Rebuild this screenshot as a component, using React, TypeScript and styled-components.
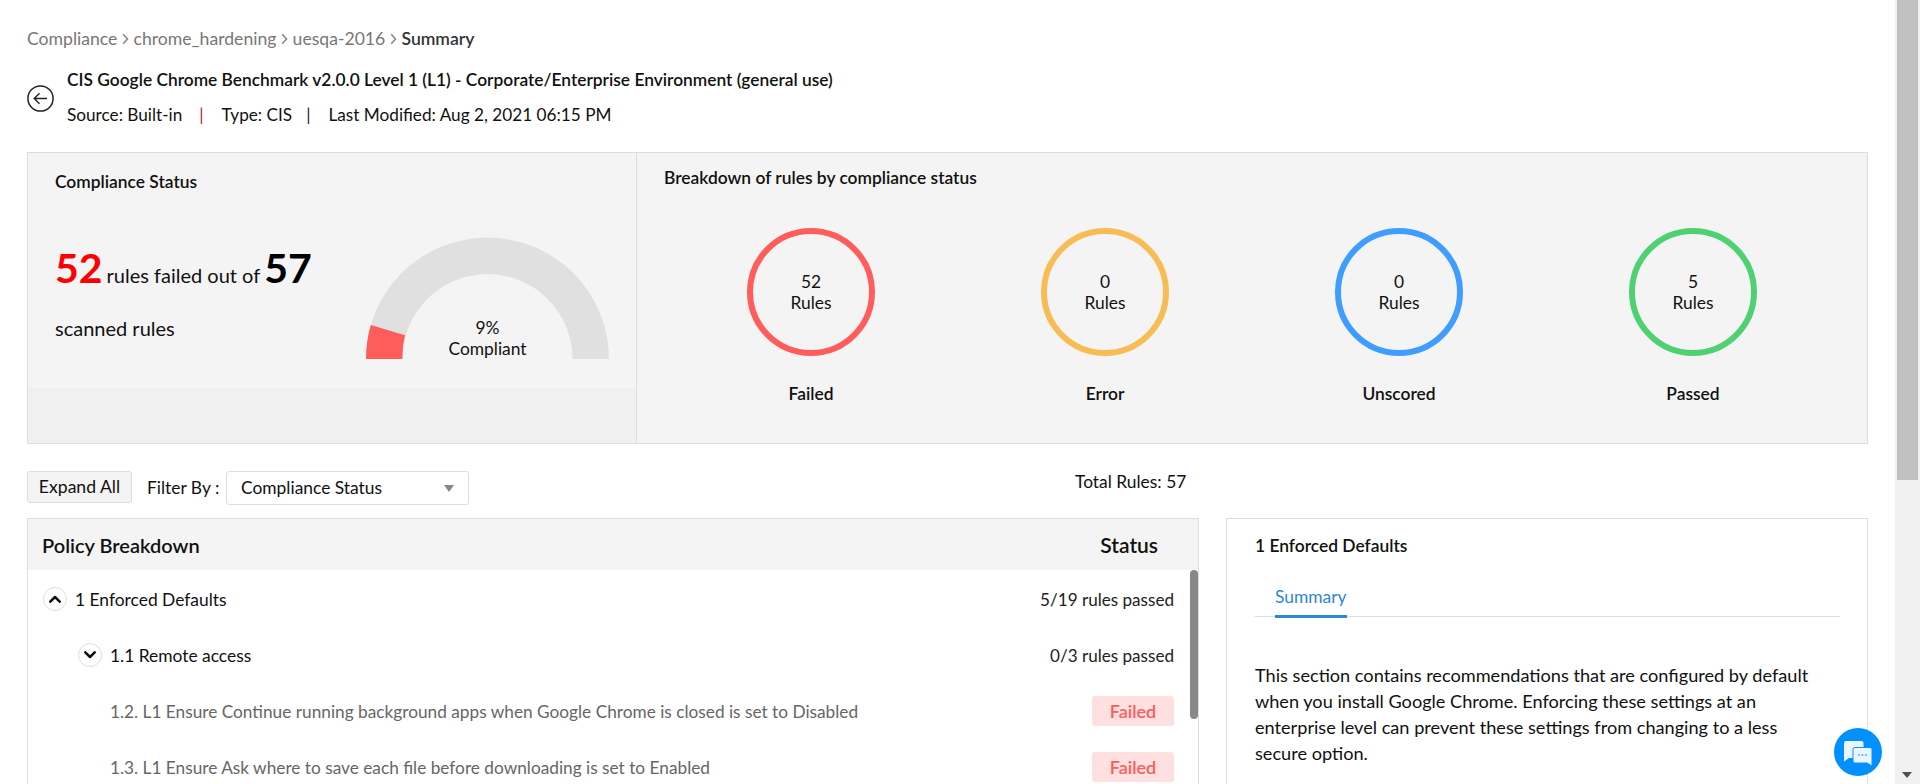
import React from 'react';
import styled, { createGlobalStyle } from 'styled-components';

const GlobalStyle = createGlobalStyle`
  html, body {
    margin: 0;
    height: 100%;
    overflow: hidden;
    background: #fff;
  }
  body {
    font-family: Lato, "Noto Sans", sans-serif;
    font-size: 17.4px;
    color: #111;
  }
  * {
    box-sizing: border-box;
  }
`;

const STATUS_CIRCLES = [
  { count: 52, label: 'Failed', color: '#ff5c5c' },
  { count: 0, label: 'Error', color: '#f8bc55' },
  { count: 0, label: 'Unscored', color: '#3f9dff' },
  { count: 5, label: 'Passed', color: '#4fd171' },
];

const Chevron = ({ up }: { up?: boolean }) => (
  <svg width="12" height="8" viewBox="0 0 12 8" fill="none" aria-hidden>
    <path d={up ? 'M1.3 6.7L6 2l4.7 4.7' : 'M1.3 1.3L6 6l4.7-4.7'} stroke="#111" strokeWidth="2.5" strokeLinecap="round" strokeLinejoin="round" />
  </svg>
);

const CrumbArrow = () => (
  <svg width="7" height="12" viewBox="0 0 7 12" fill="none" aria-hidden>
    <path d="M1.2 1.2L5.5 6l-4.3 4.8" stroke="#888" strokeWidth="1.6" />
  </svg>
);

const BackIcon = () => (
  <svg width="27" height="27" viewBox="0 0 27 27" fill="none" aria-hidden>
    <circle cx="13.5" cy="13.5" r="12.6" stroke="#222" strokeWidth="1.5" />
    <path d="M20 13.5H7.5M12.5 8.2l-5.3 5.3 5.3 5.3" stroke="#222" strokeWidth="1.4" />
  </svg>
);

const Gauge = () => (
  <svg width="243" height="122" viewBox="0 0 243 122" aria-hidden>
    <path d="M0 122A121.5 121.5 0 0 1 243 122H206.5A85 85 0 0 0 36.5 122Z" fill="#e0e0e0" />
    <path d="M0 122A121.5 121.5 0 0 1 4.8 88.1L39 98.3A85 85 0 0 0 36.5 122Z" fill="#ff5c5c" />
  </svg>
);

const ChatIcon = () => (
  <svg width="48" height="48" viewBox="0 0 48 48" aria-hidden>
    <path d="M12 13h15.5a2 2 0 0 1 2 2v13a2 2 0 0 1-2 2H15l-5 3.5V15a2 2 0 0 1 2-2Z" fill="#e9f4ff" />
    <path d="M21 19.5h15a2 2 0 0 1 2 2V38l-5-3H21a2 2 0 0 1-2-2V21.5a2 2 0 0 1 2-2Z" fill="#e9f4ff" stroke="#0a93ff" strokeWidth="1" />
    <circle cx="25" cy="27" r="0.9" fill="#4fa9f5" />
    <circle cx="28.5" cy="27" r="0.9" fill="#4fa9f5" />
    <circle cx="32" cy="27" r="0.9" fill="#4fa9f5" />
  </svg>
);

const App = () => (
  <Page>
    <GlobalStyle />
    <Main>
      <Breadcrumb>
        <span>Compliance</span>
        <CrumbArrow />
        <span>chrome_hardening</span>
        <CrumbArrow />
        <span>uesqa-2016</span>
        <CrumbArrow />
        <CrumbCurrent>Summary</CrumbCurrent>
      </Breadcrumb>

      <Header>
        <BackButton>
          <BackIcon />
        </BackButton>
        <div>
          <Title>CIS Google Chrome Benchmark v2.0.0 Level 1 (L1) - Corporate/Enterprise Environment (general use)</Title>
          <Meta>
            <span>Source: Built-in</span>
            <MetaSeparator $red>|</MetaSeparator>
            <span>Type: CIS</span>
            <MetaSeparator>|</MetaSeparator>
            <span>Last Modified: Aug 2, 2021 06:15 PM</span>
          </Meta>
        </div>
      </Header>

      <StatusPanel>
        <ComplianceSection>
          <ComplianceTop>
            <SectionTitle>Compliance Status</SectionTitle>
            <ComplianceBody>
              <StatColumn>
                <StatLine>
                  <BigNumber $failed>52</BigNumber>
                  <StatText>rules failed out of</StatText>
                  <BigNumber>57</BigNumber>
                </StatLine>
                <ScannedText>scanned rules</ScannedText>
              </StatColumn>
              <GaugeWrap>
                <Gauge />
                <GaugeLabel>
                  9%
                  <br />
                  Compliant
                </GaugeLabel>
              </GaugeWrap>
            </ComplianceBody>
          </ComplianceTop>
        </ComplianceSection>

        <BreakdownSection>
          <BreakdownTitle>Breakdown of rules by compliance status</BreakdownTitle>
          <CircleRow>
            {STATUS_CIRCLES.map(({ count, label, color }) => (
              <CircleColumn key={label}>
                <Circle $color={color}>
                  <div>{count}</div>
                  <div>Rules</div>
                </Circle>
                <CircleLabel>{label}</CircleLabel>
              </CircleColumn>
            ))}
          </CircleRow>
        </BreakdownSection>
      </StatusPanel>

      <Toolbar>
        <FilterGroup>
          <ExpandButton>Expand All</ExpandButton>
          <FilterLabel>Filter By :</FilterLabel>
          <Select>
            Compliance Status
            <SelectArrow />
          </Select>
        </FilterGroup>
        <TotalRules>Total Rules: 57</TotalRules>
      </Toolbar>

      <Columns>
        <PolicyTable>
          <TableHead>
            <span>Policy Breakdown</span>
            <StatusHeading>Status</StatusHeading>
          </TableHead>
          <TableBody>
            <Row $indent={15}>
              <RowLabel>
                <ToggleButton>
                  <Chevron up />
                </ToggleButton>
                1 Enforced Defaults
              </RowLabel>
              <RowStatus>5/19 rules passed</RowStatus>
            </Row>
            <Row $indent={50}>
              <RowLabel>
                <ToggleButton>
                  <Chevron />
                </ToggleButton>
                1.1 Remote access
              </RowLabel>
              <RowStatus>0/3 rules passed</RowStatus>
            </Row>
            <Row $indent={82}>
              <RuleLabel>1.2. L1 Ensure Continue running background apps when Google Chrome is closed is set to Disabled</RuleLabel>
              <FailedBadge>Failed</FailedBadge>
            </Row>
            <Row $indent={82}>
              <RuleLabel>1.3. L1 Ensure Ask where to save each file before downloading is set to Enabled</RuleLabel>
              <FailedBadge>Failed</FailedBadge>
            </Row>
            <TableThumb />
          </TableBody>
        </PolicyTable>

        <DetailPanel>
          <DetailTitle>1 Enforced Defaults</DetailTitle>
          <Tabs>
            <ActiveTab>Summary</ActiveTab>
          </Tabs>
          <DetailText>
            This section contains recommendations that are configured by default when you install Google Chrome. Enforcing
            these settings at an enterprise level can prevent these settings from changing to a less secure option.
          </DetailText>
        </DetailPanel>
      </Columns>
    </Main>

    <Scrollbar>
      <ScrollThumb />
      <ScrollArrow />
    </Scrollbar>

    <ChatButton>
      <ChatIcon />
    </ChatButton>
  </Page>
);

export default App;

const Page = styled.div`
  display: flex;
  width: 1920px;
  height: 784px;
  overflow: hidden;
`;

const Main = styled.main`
  flex: 1;
  min-width: 0;
  padding: 28px 27px 0;
`;

const Breadcrumb = styled.nav`
  display: flex;
  align-items: center;
  gap: 4.6px;
  height: 22px;
  font-size: 17.6px;
  line-height: 22px;
  color: #777;
`;

const CrumbCurrent = styled.span`
  color: #333;
  font-weight: 600;
`;

const Header = styled.header`
  display: flex;
  align-items: center;
  gap: 13px;
  margin-top: 19px;
`;

const BackButton = styled.div`
  display: flex;
  margin-top: 1px;
`;

const Title = styled.div`
  font-size: 17.35px;
  font-weight: 600;
  line-height: 22px;
`;

const Meta = styled.div`
  display: flex;
  margin-top: 13px;
  font-size: 17.2px;
  line-height: 22px;
`;

const MetaSeparator = styled.span<{ $red?: boolean }>`
  margin: ${({ $red }) => ($red ? '0 18px 0 17px' : '0 18px 0 14px')};
  color: ${({ $red }) => ($red ? '#c8102e' : '#222')};
`;

const StatusPanel = styled.section`
  display: flex;
  height: 292px;
  margin-top: 26px;
  border: 1px solid #ddd;
`;

const ComplianceSection = styled.div`
  width: 609px;
  background: #f0f0f0;
  border-right: 1px solid #ddd;
`;

const ComplianceTop = styled.div`
  height: 235px;
  padding: 19px 27px 0;
  background: #f4f4f4;
`;

const SectionTitle = styled.div`
  font-weight: 600;
  line-height: 20px;
`;

const ComplianceBody = styled.div`
  display: flex;
  margin-top: 45px;
`;

const StatColumn = styled.div`
  width: 311px;
`;

const StatLine = styled.div`
  display: flex;
  align-items: baseline;
  gap: 4px;
  height: 62px;
  line-height: 62px;
`;

const BigNumber = styled.span<{ $failed?: boolean }>`
  font-size: 41px;
  font-weight: 700;
  color: ${({ $failed }) => ($failed ? '#f00' : '#000')};
`;

const StatText = styled.span`
  font-size: 20px;
`;

const ScannedText = styled.div`
  margin-top: 18px;
  font-size: 20px;
  line-height: 22px;
`;

const GaugeWrap = styled.div`
  position: relative;
  width: 243px;
  height: 122px;
`;

const GaugeLabel = styled.div`
  position: absolute;
  left: 0;
  right: 0;
  bottom: 0;
  text-align: center;
  line-height: 21px;
`;

const BreakdownSection = styled.div`
  flex: 1;
  padding: 15px 27px 0 27px;
  background: #f4f4f4;
`;

const BreakdownTitle = styled.div`
  font-weight: 600;
  line-height: 20px;
`;

const CircleRow = styled.div`
  display: grid;
  grid-template-columns: repeat(4, 1fr);
  margin-top: 40px;
`;

const CircleColumn = styled.div`
  display: flex;
  flex-direction: column;
  align-items: center;
`;

const Circle = styled.div<{ $color: string }>`
  display: flex;
  flex-direction: column;
  align-items: center;
  justify-content: center;
  width: 128px;
  height: 128px;
  border: 6px solid ${({ $color }) => $color};
  border-radius: 50%;
  line-height: 21px;
  text-align: center;
`;

const CircleLabel = styled.div`
  margin-top: 28px;
  font-weight: 600;
  line-height: 20px;
`;

const Toolbar = styled.div`
  display: flex;
  align-items: flex-start;
  height: 74px;
  padding-top: 27px;
`;

const FilterGroup = styled.div`
  display: flex;
  align-items: flex-start;
  width: 1048px;
`;

const ExpandButton = styled.div`
  width: 105px;
  height: 32px;
  border: 1px solid #ddd;
  border-radius: 3px;
  background: #f4f4f4;
  font-size: 17.6px;
  line-height: 30px;
  text-align: center;
`;

const FilterLabel = styled.div`
  margin-left: 15px;
  width: 79px;
  line-height: 34px;
`;

const Select = styled.div`
  position: relative;
  width: 243px;
  height: 34px;
  padding-left: 14px;
  border: 1px solid #ddd;
  border-radius: 3px;
  background: #fff;
  line-height: 32px;
`;

const SelectArrow = styled.span`
  position: absolute;
  top: 13px;
  right: 14px;
  border-left: 5.5px solid transparent;
  border-right: 5.5px solid transparent;
  border-top: 7px solid #888;
`;

const TotalRules = styled.div`
  line-height: 22px;
`;

const Columns = styled.div`
  display: grid;
  grid-template-columns: 1172px 642px;
  gap: 27px;
`;

const PolicyTable = styled.section`
  height: 266px;
  border: 1px solid #ddd;
  border-bottom: none;
`;

const TableHead = styled.div`
  display: flex;
  justify-content: space-between;
  align-items: center;
  height: 51px;
  padding: 0 40px 0 14px;
  background: #f4f4f4;
  font-size: 20px;
  font-weight: 600;
`;

const StatusHeading = styled.span`
  font-size: 21px;
`;

const TableBody = styled.div`
  position: relative;
  height: 214px;
  padding-top: 1px;
  overflow: hidden;
`;

const TableThumb = styled.div`
  position: absolute;
  top: 0;
  right: 0;
  width: 8px;
  height: 149px;
  border-radius: 4px;
  background: #888;
`;

const Row = styled.div<{ $indent: number }>`
  display: flex;
  justify-content: space-between;
  align-items: center;
  height: 56px;
  padding: 0 24px 0 ${({ $indent }) => $indent}px;
`;

const RowLabel = styled.div`
  display: flex;
  align-items: center;
  gap: 8px;
`;

const ToggleButton = styled.span`
  display: flex;
  align-items: center;
  justify-content: center;
  width: 24px;
  height: 24px;
  border: 1px solid #ddd;
  border-radius: 50%;
  background: #fff;
`;

const RowStatus = styled.div`
  font-size: 17.1px;
  color: #222;
`;

const RuleLabel = styled.div`
  font-size: 17.25px;
  color: #666;
`;

const FailedBadge = styled.div`
  width: 82px;
  height: 30px;
  border-radius: 3px;
  background: #ffe0e0;
  color: #ff5c5c;
  font-size: 18px;
  font-weight: 600;
  line-height: 30px;
  text-align: center;
`;

const DetailPanel = styled.section`
  height: 266px;
  padding: 0 27px 0 28px;
  border: 1px solid #ddd;
  border-bottom: none;
`;

const DetailTitle = styled.div`
  margin-top: 17px;
  font-weight: 600;
  line-height: 20px;
`;

const Tabs = styled.div`
  display: flex;
  height: 42px;
  margin-top: 19px;
  padding-left: 20px;
  border-bottom: 1px solid #ddd;
`;

const ActiveTab = styled.div`
  height: 43px;
  padding-top: 11px;
  border-bottom: 3px solid #2d87d8;
  color: #2d87d8;
  line-height: 22px;
`;

const DetailText = styled.p`
  max-width: 570px;
  margin: 45px 0 0;
  font-size: 18.15px;
  line-height: 26px;
`;

const Scrollbar = styled.div`
  position: relative;
  flex: none;
  width: 25px;
  padding: 0 2px;
  background: #f1f1f1;
`;

const ScrollThumb = styled.div`
  height: 480px;
  background: #c1c1c1;
`;

const ScrollArrow = styled.span`
  position: absolute;
  left: 7px;
  bottom: 6px;
  border-left: 5.5px solid transparent;
  border-right: 5.5px solid transparent;
  border-top: 6px solid #505050;
`;

const ChatButton = styled.div`
  position: fixed;
  left: 1834px;
  top: 728px;
  width: 48px;
  height: 48px;
  border-radius: 50%;
  background: #0090ff;
`;
